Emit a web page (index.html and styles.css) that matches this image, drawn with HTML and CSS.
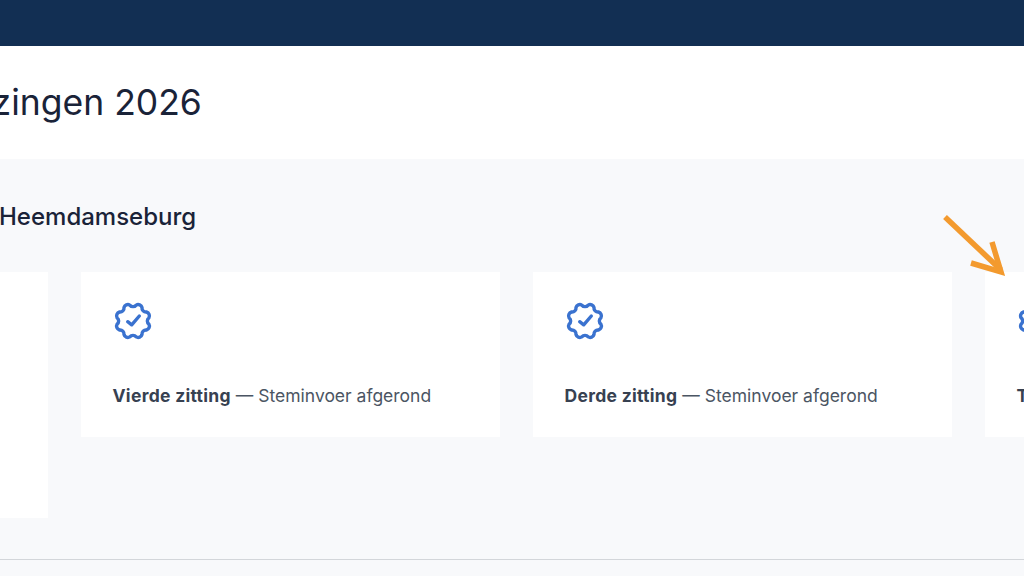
FILE: index.html
```html
<!DOCTYPE html>
<html lang="nl">
<head>
    <meta charset="UTF-8">
    <meta name="viewport" content="width=device-width, initial-scale=1.0">
    <title>Verkiezingen 2026</title>
    <link rel="stylesheet" href="styles.css">
</head>
<body>
    <svg width="0" height="0" class="defs">
        <symbol id="badge" viewBox="0 0 40 40">
            <path d="M16.84 4.11A4 4 0 0 0 23.16 4.11A4 4 0 0 1 29 6.53A4 4 0 0 0 33.47 11A4 4 0 0 1 35.89 16.84A4 4 0 0 0 35.89 23.16A4 4 0 0 1 33.47 29A4 4 0 0 0 29 33.47A4 4 0 0 1 23.16 35.89A4 4 0 0 0 16.84 35.89A4 4 0 0 1 11 33.47A4 4 0 0 0 6.53 29A4 4 0 0 1 4.11 23.16A4 4 0 0 0 4.11 16.84A4 4 0 0 1 6.53 11A4 4 0 0 0 11 6.53A4 4 0 0 1 16.84 4.11Z" />
            <path d="M14.7 20.7L18.7 23.8L26.3 15" />
        </symbol>
    </svg>

    <header class="topbar"></header>

    <section class="title-band">
        <h1>Verkiezingen 2026</h1>
    </section>

    <main class="content">
        <h2>Heemdamseburg</h2>
        <div class="cards">
            <div class="card card-tall"></div>
            <div class="card">
                <svg class="badge"><use href="#badge"></use></svg>
                <p><strong>Vierde zitting</strong> — Steminvoer afgerond</p>
            </div>
            <div class="card">
                <svg class="badge"><use href="#badge"></use></svg>
                <p><strong>Derde zitting</strong> — Steminvoer afgerond</p>
            </div>
            <div class="card">
                <svg class="badge"><use href="#badge"></use></svg>
                <p><strong>Tweede zitting</strong> — Steminvoer afgerond</p>
            </div>
        </div>
        <div class="divider"></div>
    </main>

    <svg class="arrow" width="70" height="66" viewBox="0 0 70 66">
        <path d="M4 4L60 57" />
        <path d="M51 29L60 59L30 50" />
    </svg>
</body>
</html>
```

FILE: styles.css
```css
html, body {
    height: 100%;
}

body {
    margin: 0;
    overflow: hidden;
    position: relative;
    background: #f8f9fb;
    font-family: "Inter", "Liberation Sans", sans-serif;
    color: #1c2536;
}

.defs {
    display: block;
}

.topbar {
    height: 46px;
    background: #122f53;
}

.title-band {
    height: 113px;
    background: #fff;
    display: flex;
    align-items: center;
}

h1 {
    margin: 0 0 0 -114px;
    font-size: 35.5px;
    line-height: 1;
    font-weight: 400;
    white-space: nowrap;
    color: #1a2338;
}

.content {
    padding-top: 44px;
}

h2 {
    margin: 0 0 41px -1px;
    font-size: 24px;
    line-height: 28px;
    font-weight: 500;
    color: #1a2338;
}

.cards {
    display: flex;
    align-items: flex-start;
    gap: 32.5px;
    margin-left: -371.5px;
}

.card {
    flex: 0 0 419.5px;
    height: 165px;
    box-sizing: border-box;
    padding: 29px 32px 0;
    background: #fff;
}

.card-tall {
    height: 246px;
}

.badge {
    display: block;
    width: 40px;
    height: 40px;
    fill: none;
    stroke: #3a72cf;
    stroke-width: 3.4;
    stroke-linecap: round;
    stroke-linejoin: round;
}

.card p {
    margin: 42px 0 0;
    font-size: 17.5px;
    line-height: 26px;
    white-space: nowrap;
    color: #4b5563;
}

.card strong {
    font-weight: 700;
    letter-spacing: 0.3px;
    color: #374151;
}

.divider {
    margin-top: 41px;
    height: 1px;
    background: #d3d6da;
}

.arrow {
    position: absolute;
    left: 941px;
    top: 213px;
    fill: none;
    stroke: #f39a2e;
    stroke-width: 5.5;
}
```
